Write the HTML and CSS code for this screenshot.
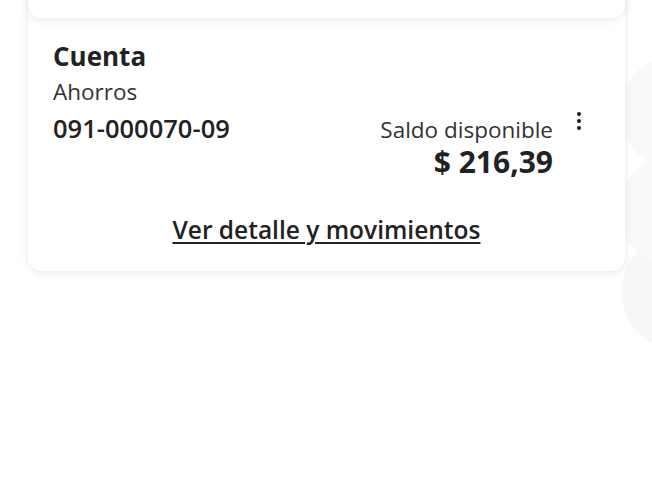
FILE: index.html
```html
<!DOCTYPE html>
<html lang="es">
  <head>
    <meta charset="UTF-8" />
    <title>Cuenta de ahorros</title>
    <link rel="stylesheet" href="styles.css">
  </head>
  <body>
    <div class="page">
      <div class="card card-prev"></div>

      <div class="card account-card">
        <div class="account-head">
          <div class="account-info">
            <div class="account-title">Cuenta</div>
            <div class="account-type">Ahorros</div>
            <div class="account-number">091-000070-09</div>
          </div>
          <div class="balance">
            <div class="balance-label">Saldo disponible</div>
            <div class="balance-amount">$ 216,39</div>
          </div>
          <button class="menu-btn" type="button" aria-label="Opciones">
            <span class="dot"></span>
            <span class="dot"></span>
            <span class="dot"></span>
          </button>
        </div>
        <a class="detail-link" href="#">Ver detalle y movimientos</a>
      </div>
    </div>
  </body>
</html>
```

FILE: styles.css
```css
body {
  margin: 0;
  padding: 0;
  min-height: 100vh;
  font-family: "Open Sans", "Liberation Sans", Arial, sans-serif;
  color: #222;
  background-color: #fff;
  background-image:
    radial-gradient(circle at 676px 112px, #f9f9f9 56px, transparent 57px),
    radial-gradient(circle at 676px 210px, #f9f9f9 56px, transparent 57px),
    radial-gradient(circle at 680px 292px, #f7f7f7 58px, transparent 59px);
  background-repeat: no-repeat;
  overflow: hidden;
}
.page {
  padding: 0 27px 0 28px;
}
.card {
  background: #fff;
  border-radius: 14px;
  box-shadow: 0 2px 8px rgba(0, 0, 0, 0.09);
}
.card-prev {
  position: relative;
  z-index: 1;
  height: 58px;
  margin-top: -40px;
}
.account-card {
  margin-top: -30px;
  padding: 52px 25px 25px 25px;
}
.account-head {
  display: flex;
  align-items: flex-start;
}
.account-info {
  display: flex;
  flex-direction: column;
}
.account-title {
  font-size: 26px;
  line-height: 32px;
  font-weight: 700;
  color: #222;
}
.account-type {
  margin-top: 5px;
  font-size: 22.5px;
  line-height: 30px;
  color: #333;
}
.account-number {
  margin-top: 5px;
  font-size: 25.5px;
  line-height: 32px;
  font-weight: 600;
  color: #222;
}
.balance {
  margin-left: auto;
  padding-top: 75px;
  display: flex;
  flex-direction: column;
  align-items: flex-end;
}
.balance-label {
  font-size: 22.5px;
  line-height: 30px;
  color: #333;
}
.balance-amount {
  font-size: 30px;
  line-height: 34px;
  font-weight: 700;
  color: #222;
}
.menu-btn {
  margin: 70px 11px 0 16px;
  width: 20px;
  height: 22px;
  padding: 0;
  border: none;
  background: none;
  display: flex;
  flex-direction: column;
  align-items: center;
  justify-content: center;
  gap: 2.5px;
  cursor: pointer;
}
.dot {
  width: 4.5px;
  height: 4.5px;
  border-radius: 50%;
  background: #1a1a1a;
}
.detail-link {
  display: block;
  width: fit-content;
  margin: 35px auto 0;
  font-size: 24.5px;
  line-height: 32px;
  font-weight: 600;
  color: #222;
  text-decoration: underline;
  text-decoration-thickness: 2px;
  text-underline-offset: 3px;
}
```
